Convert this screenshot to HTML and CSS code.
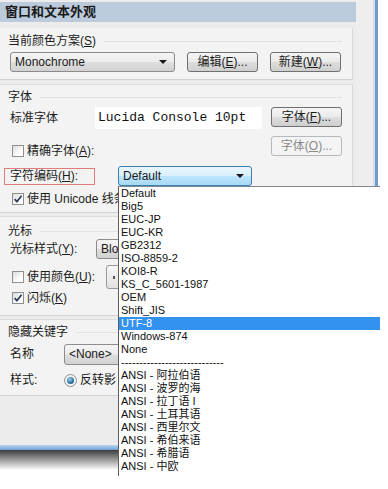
FILE: index.html
```html
<!DOCTYPE html>
<html lang="zh-CN">
<head>
<meta charset="utf-8">
<title>窗口和文本外观</title>
<link rel="stylesheet" href="styles.css">
</head>
<body>
<div class="window">
  <div class="dialog">
    <div class="main">
      <div class="title">窗口和文本外观</div>

      <section class="group g1">
        <div class="legend"><span class="legend-text">当前颜色方案(<u>S</u>)</span><span class="legend-line"></span></div>
        <div class="row row-scheme">
          <div class="combo combo-scheme"><span class="combo-text">Monochrome</span><i class="arrow"></i></div>
          <button class="btn">编辑(<u>E</u>)...</button>
          <button class="btn">新建(<u>W</u>)...</button>
        </div>
      </section>

      <section class="group g2">
        <div class="legend"><span class="legend-text">字体</span><span class="legend-line"></span></div>
        <div class="row row-font">
          <span class="label label-font">标准字体</span>
          <div class="font-box">Lucida Console 10pt</div>
          <button class="btn btn-right">字体(<u>F</u>)...</button>
        </div>
        <div class="row row-exact">
          <label class="check check-exact"><span class="box"></span><span>精确字体(<u>A</u>):</span></label>
          <button class="btn btn-right btn-disabled">字体(<u>O</u>)...</button>
        </div>
        <div class="row row-enc">
          <span class="label red-box">字符编码(<u>H</u>):</span>
          <div class="combo combo-focus"><span class="combo-text">Default</span><i class="arrow"></i></div>
        </div>
        <div class="row row-check">
          <label class="check clip-118"><span class="box checked"><svg viewBox="0 0 12 12" width="12" height="12"><path d="M2.6 6.2 L4.9 8.6 L9.6 2.8" fill="none" stroke="#2b3f5a" stroke-width="1.7"/></svg></span><span class="nowrap">使用 Unicode 线条</span></label>
        </div>
      </section>

      <section class="group g3">
        <div class="legend"><span class="legend-text">光标</span><span class="legend-line"></span></div>
        <div class="row row-cursor">
          <span class="label label-cursor">光标样式(<u>Y</u>):</span>
          <div class="clip clip-cursor"><div class="combo combo-cursor"><span class="combo-text">Bloc</span></div></div>
        </div>
        <div class="row row-color">
          <label class="check check-color"><span class="box"></span><span>使用颜色(<u>U</u>):</span></label>
          <div class="clip clip-color"><div class="color-btn"><span class="swatch"></span></div></div>
        </div>
        <div class="row row-check">
          <label class="check"><span class="box checked"><svg viewBox="0 0 12 12" width="12" height="12"><path d="M2.6 6.2 L4.9 8.6 L9.6 2.8" fill="none" stroke="#2b3f5a" stroke-width="1.7"/></svg></span><span>闪烁(<u>K</u>)</span></label>
        </div>
      </section>

      <section class="group g4">
        <div class="legend"><span class="legend-text">隐藏关键字</span><span class="legend-line"></span></div>
        <div class="row row-name">
          <span class="label label-name">名称</span>
          <div class="clip clip-name"><div class="combo combo-name"><span class="combo-text">&lt;None&gt;</span></div></div>
        </div>
        <div class="row row-style">
          <span class="label label-name">样式:</span>
          <span class="radio"><span class="dot"></span></span>
          <span class="radio-label">反转影</span>
        </div>
      </section>
    </div>
    <div class="strip"></div>
  </div>
  <div class="frame-bottom"></div>
  <div class="shadow"></div>
</div>

<ul class="droplist">
  <li>Default</li>
  <li>Big5</li>
  <li>EUC-JP</li>
  <li>EUC-KR</li>
  <li>GB2312</li>
  <li>ISO-8859-2</li>
  <li>KOI8-R</li>
  <li>KS_C_5601-1987</li>
  <li>OEM</li>
  <li>Shift_JIS</li>
  <li class="selected">UTF-8</li>
  <li>Windows-874</li>
  <li>None</li>
  <li class="dashes">----------------------------</li>
  <li>ANSI - 阿拉伯语</li>
  <li>ANSI - 波罗的海</li>
  <li>ANSI - 拉丁语 I</li>
  <li>ANSI - 土耳其语</li>
  <li>ANSI - 西里尔文</li>
  <li>ANSI - 希伯来语</li>
  <li>ANSI - 希腊语</li>
  <li>ANSI - 中欧</li>
</ul>
</body>
</html>
```

FILE: styles.css
```css
* { box-sizing: border-box; }

html, body {
  margin: 0;
  padding: 0;
}

body {
  width: 388px;
  height: 489px;
  overflow: hidden;
  position: relative;
  background: #ffffff;
  font-family: "Liberation Sans", "Noto Sans CJK SC", sans-serif;
  font-size: 12px;
  line-height: 16px;
  color: #1b1b1b;
}

u { text-decoration: underline; text-underline-offset: 1px; }

.nowrap { white-space: nowrap; }

.window { width: 378px; }

.dialog {
  display: flex;
  height: 445px;
  background: #ececec;
  border-right: 3px solid #6f9bd2;
}

.main {
  width: 356px;
  padding-top: 2px;
  background: #ececec;
}

.title {
  height: 20px;
  line-height: 20px;
  padding-left: 5px;
  background: #bccbdc;
  font-weight: bold;
  font-size: 13px;
  color: #1a1a1a;
}

.strip {
  flex: 1;
  background: #eeeeee;
  border-right: 2px solid #d6dee8;
}

.group {
  width: 353px;
  background: #f3f3f3;
  border-right: 1px solid #dadada;
  border-bottom: 1px solid #d2d2d2;
  padding-right: 10px;
}

.g1 { margin-top: 6px; padding-top: 5px; padding-bottom: 7px; }
.g2 { margin-top: 4px; border-top: 1px solid #dcdcdc; padding-top: 4px; padding-bottom: 5px; }
.g3 { margin-top: 3px; border-top: 1px solid #dcdcdc; padding-top: 6px; padding-bottom: 9px; }
.g4 { margin-top: 3px; border-top: 1px solid #dcdcdc; padding-top: 4px; padding-bottom: 7px; }

.legend {
  display: flex;
  align-items: center;
  height: 16px;
}
.legend-text { padding-left: 8px; white-space: nowrap; }
.legend-line {
  flex: 1;
  height: 1px;
  margin-left: 8px;
  background: #e2e2e2;
}

.row {
  display: flex;
  align-items: center;
}

.label { white-space: nowrap; }

.clip { overflow: hidden; flex: none; }

/* group 1 */
.row-scheme { margin-top: 3px; height: 20px; padding-left: 10px; gap: 12px; }
.combo {
  position: relative;
  height: 20px;
  border: 1px solid #8c8c8c;
  border-radius: 3px;
  background: linear-gradient(#f5f5f5, #ececec 48%, #dedede 52%, #d2d2d2);
  padding-left: 4px;
  line-height: 18px;
  white-space: nowrap;
  overflow: hidden;
}
.combo-scheme { width: 165px; }
.arrow {
  position: absolute;
  right: 7px;
  top: 7px;
  width: 0;
  height: 0;
  border-left: 4px solid transparent;
  border-right: 4px solid transparent;
  border-top: 4px solid #1a1a1a;
}

.btn {
  width: 71px;
  height: 20px;
  padding: 0;
  border: 1px solid #707070;
  border-radius: 3px;
  background: linear-gradient(#f4f4f4, #ebebeb 48%, #dddddd 52%, #cfcfcf);
  font-family: inherit;
  font-size: 12px;
  line-height: 18px;
  color: #1b1b1b;
  white-space: nowrap;
}
.btn-right { margin-left: auto; }
.btn-disabled {
  border-color: #b5b9bc;
  background: #f4f4f4;
  color: #8a8a8a;
}

/* group 2 */
.row-font { margin-top: 2px; height: 23px; align-items: flex-start; }
.label-font { width: 95px; padding-left: 10px; line-height: 23px; }
.font-box {
  width: 167px;
  height: 22px;
  background: #ffffff;
  font-family: "Liberation Mono", monospace;
  font-size: 13px;
  line-height: 22px;
  padding-left: 3px;
  color: #111;
  white-space: nowrap;
}

.row-exact { margin-top: 6px; height: 21px; align-items: flex-start; }
.check {
  display: flex;
  align-items: center;
  height: 16px;
  padding-left: 12px;
  white-space: nowrap;
}
.clip-118 { width: 118px; overflow: hidden; }
.check-exact { margin-top: 7px; }
.box {
  width: 12px;
  height: 12px;
  margin-right: 3px;
  border: 1px solid #8e8f8f;
  background: linear-gradient(135deg, #dcdcdc, #ffffff 70%);
  display: flex;
  align-items: center;
  justify-content: center;
  flex: none;
}
.box svg { display: block; margin: -1px; }

.row-enc { margin-top: 9px; height: 20px; }
.red-box {
  margin-left: 4px;
  width: 91px;
  height: 17px;
  border: 1px solid #e27b7b;
  padding-left: 5px;
  line-height: 15px;
}
.combo-focus {
  margin-left: 23px;
  width: 134px;
  border-color: #3c7fb1;
  background: linear-gradient(#eaf6fd, #d9f0fc 48%, #bee6fd 52%, #a7d9f5);
}

.row-check { margin-top: 5px; height: 16px; }

/* group 3 */
.row-cursor { margin-top: 0; height: 20px; }
.label-cursor { width: 96px; padding-left: 10px; }
.clip-cursor { width: 22px; }
.combo-cursor { width: 150px; }

.row-color { margin-top: 6px; height: 24px; }
.check-color { width: 106px; }
.clip-color { width: 12px; }
.color-btn {
  width: 40px;
  height: 24px;
  border: 1px solid #9a9a9a;
  border-radius: 3px;
  background: linear-gradient(#f6f6f6, #e2e2e2);
  position: relative;
}
.swatch {
  position: absolute;
  left: 6px;
  top: 10px;
  width: 2px;
  height: 3px;
  background: #555;
}
.g3 .row-check { margin-top: 1px; }

/* group 4 */
.row-name { margin-top: 3px; height: 22px; }
.label-name { width: 64px; padding-left: 10px; }
.clip-name { width: 54px; }
.combo-name { width: 120px; height: 21px; }

.row-style { margin-top: 7px; height: 16px; }
.radio {
  width: 13px;
  height: 13px;
  border-radius: 50%;
  border: 1px solid #8a8e92;
  background: #f4f4f4;
  display: flex;
  align-items: center;
  justify-content: center;
  flex: none;
}
.dot {
  width: 7px;
  height: 7px;
  border-radius: 50%;
  background: radial-gradient(circle at 40% 35%, #9fd2ee, #2a6e9a 60%, #1a4566);
}
.radio-label { margin-left: 3px; white-space: nowrap; }

.frame-bottom {
  height: 5px;
  background: linear-gradient(#b9d4ef, #6f9fd6);
}
.shadow {
  height: 20px;
  background: linear-gradient(#3c3c3c, rgba(255, 255, 255, 0));
}

/* dropdown list overlay */
.droplist {
  position: absolute;
  left: 118px;
  top: 186px;
  width: 262px;
  height: 290px;
  margin: 0;
  padding: 0;
  list-style: none;
  background: #ffffff;
  border-top: 1px solid #7f8790;
  border-left: 1px solid #5e5e5e;
  font-size: 11px;
  line-height: 13px;
  color: #111;
}
.droplist li {
  height: 13px;
  padding-left: 2px;
  white-space: nowrap;
}
.droplist li.selected {
  background: #3391f0;
  color: #ffffff;
}
```
